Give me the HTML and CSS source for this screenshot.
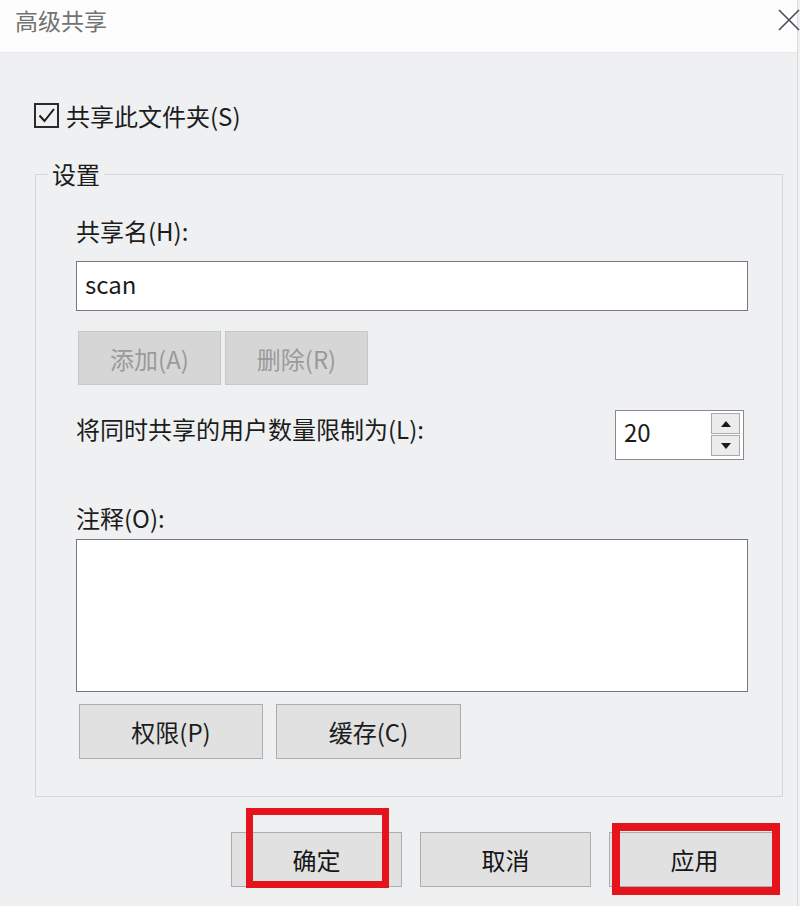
FILE: index.html
```html
<!DOCTYPE html>
<html lang="zh-CN">
<head>
<meta charset="utf-8">
<title>高级共享</title>
<link rel="stylesheet" href="styles.css">
</head>
<body>
<div class="window">
  <div class="titlebar">
    <span class="title">高级共享</span>
    <svg class="close" width="22" height="22" viewBox="0 0 22 22"><path d="M1 1 L21 21 M21 1 L1 21" stroke="#4a4a55" stroke-width="1.6" fill="none"/></svg>
  </div>
  <div class="content">
    <div class="check-row">
      <span class="checkbox"><svg width="21" height="21" viewBox="0 0 21 21"><path d="M3.5 10.5 L8.5 16 L18 4" stroke="#1a1a1a" stroke-width="2" fill="none"/></svg></span>
      <span class="check-label">共享此文件夹(S)</span>
    </div>
    <fieldset class="group">
      <legend>设置</legend>
      <div class="label">共享名(H):</div>
      <div class="input">scan</div>
      <div class="btn-row small">
        <div class="btn disabled w143">添加(A)</div>
        <div class="btn disabled w143">删除(R)</div>
      </div>
      <div class="limit-row">
        <div class="label limit-label">将同时共享的用户数量限制为(L):</div>
        <div class="spin">
          <span class="spin-val">20</span>
          <div class="spin-btns">
            <div class="spin-btn"><svg width="10" height="6" viewBox="0 0 10 6"><path d="M0 6 L5 0 L10 6 Z" fill="#1a1a1a"/></svg></div>
            <div class="spin-btn"><svg width="10" height="6" viewBox="0 0 10 6"><path d="M0 0 L5 6 L10 0 Z" fill="#1a1a1a"/></svg></div>
          </div>
        </div>
      </div>
      <div class="label comment-label">注释(O):</div>
      <div class="textarea"></div>
      <div class="btn-row perm">
        <div class="btn w184">权限(P)</div>
        <div class="btn w185">缓存(C)</div>
      </div>
    </fieldset>
    <div class="footer">
      <div class="btn bottom">确定</div>
      <div class="btn bottom">取消</div>
      <div class="btn bottom">应用</div>
    </div>
  </div>
  <div class="mark mark-ok"></div>
  <div class="mark mark-apply"></div>
</div>
</body>
</html>
```

FILE: styles.css
```css
html, body {
  margin: 0;
  padding: 0;
}
body {
  width: 800px;
  height: 906px;
  background: #f0f0f1;
  font-family: "Noto Sans CJK SC", "Noto Sans", sans-serif;
  color: #1c1c1c;
  overflow: hidden;
}
.window {
  position: relative;
  width: 797px;
  height: 906px;
  background: #eff0f1;
  border-right: 1px solid #dcdcdc;
}
.titlebar {
  height: 52px;
  background: #fdfdfe;
  border-bottom: 1px solid #e8e8ea;
  display: flex;
  justify-content: space-between;
  align-items: flex-start;
  padding-left: 15px;
}
.title {
  font-size: 23px;
  line-height: 40px;
  color: #727272;
}
.close {
  margin-top: 9px;
  margin-right: -3px;
}
.content {
  padding-left: 35px;
}
.check-row {
  display: flex;
  align-items: center;
  margin-top: 50px;
  height: 25px;
}
.checkbox {
  width: 21px;
  height: 21px;
  border: 2px solid #2a2a2a;
  display: flex;
  margin-left: -1px;
}
.check-label {
  font-size: 24px;
  line-height: 30px;
  margin-left: 7px;
}
.group {
  margin: 31px 0 0 0;
  padding: 27px 34px 37px 40px;
  width: 672px;
  border: 1px solid #d6d6d8;
  min-width: 0;
}
.group legend {
  font-size: 24px;
  line-height: 30px;
  padding: 0 4px;
  margin-left: -28px;
}
.label {
  font-size: 24px;
  line-height: 30px;
}
.input {
  margin-top: 15px;
  height: 48px;
  border: 1px solid #77777d;
  background: #fff;
  font-size: 24px;
  line-height: 44px;
  padding-left: 8px;
}
.btn-row {
  display: flex;
}
.btn-row.small {
  margin-top: 20px;
  margin-left: 2px;
  gap: 4px;
}
.btn {
  display: flex;
  align-items: center;
  justify-content: center;
  background: #e1e1e2;
  border: 1px solid #adadad;
  font-size: 24px;
  box-sizing: border-box;
}
.btn.disabled {
  background: #d6d6d7;
  border-color: #c7c7c7;
  color: #9a9a9a;
}
.w143 {
  width: 143px;
  height: 54px;
}
.limit-row {
  margin-top: 25px;
  display: flex;
  justify-content: space-between;
  align-items: flex-start;
}
.limit-label {
  margin-top: 4px;
}
.spin {
  width: 129px;
  height: 50px;
  box-sizing: border-box;
  margin-right: 4px;
  border: 1px solid #8a8a8e;
  background: #fff;
  display: flex;
  justify-content: space-between;
}
.spin-val {
  font-size: 24px;
  line-height: 42px;
  padding-left: 8px;
}
.spin-btns {
  display: flex;
  flex-direction: column;
  margin: 2px 3px 0 0;
  gap: 1px;
}
.spin-btn {
  width: 29px;
  height: 21px;
  box-sizing: border-box;
  background: #ececec;
  border: 1px solid #a8a8a8;
  display: flex;
  align-items: center;
  justify-content: center;
}
.comment-label {
  margin-top: 43px;
}
.textarea {
  margin-top: 6px;
  height: 151px;
  border: 1px solid #77777d;
  background: #fff;
}
.btn-row.perm {
  margin-top: 12px;
  margin-left: 3px;
  gap: 13px;
}
.w184 {
  width: 184px;
  height: 55px;
}
.w185 {
  width: 185px;
  height: 55px;
}
.footer {
  margin-top: 35px;
  display: flex;
  justify-content: flex-end;
  gap: 18px;
  padding-right: 17px;
}
.btn.bottom {
  width: 171px;
  height: 55px;
  color: #151515;
}
.mark {
  position: absolute;
  border-style: solid;
  border-color: #e5131b;
  box-sizing: border-box;
}
.mark-ok {
  left: 246px;
  top: 808px;
  width: 143px;
  height: 80px;
  border-width: 7px;
}
.mark-apply {
  left: 612px;
  top: 823px;
  width: 168px;
  height: 72px;
  border-width: 8px;
}
```
